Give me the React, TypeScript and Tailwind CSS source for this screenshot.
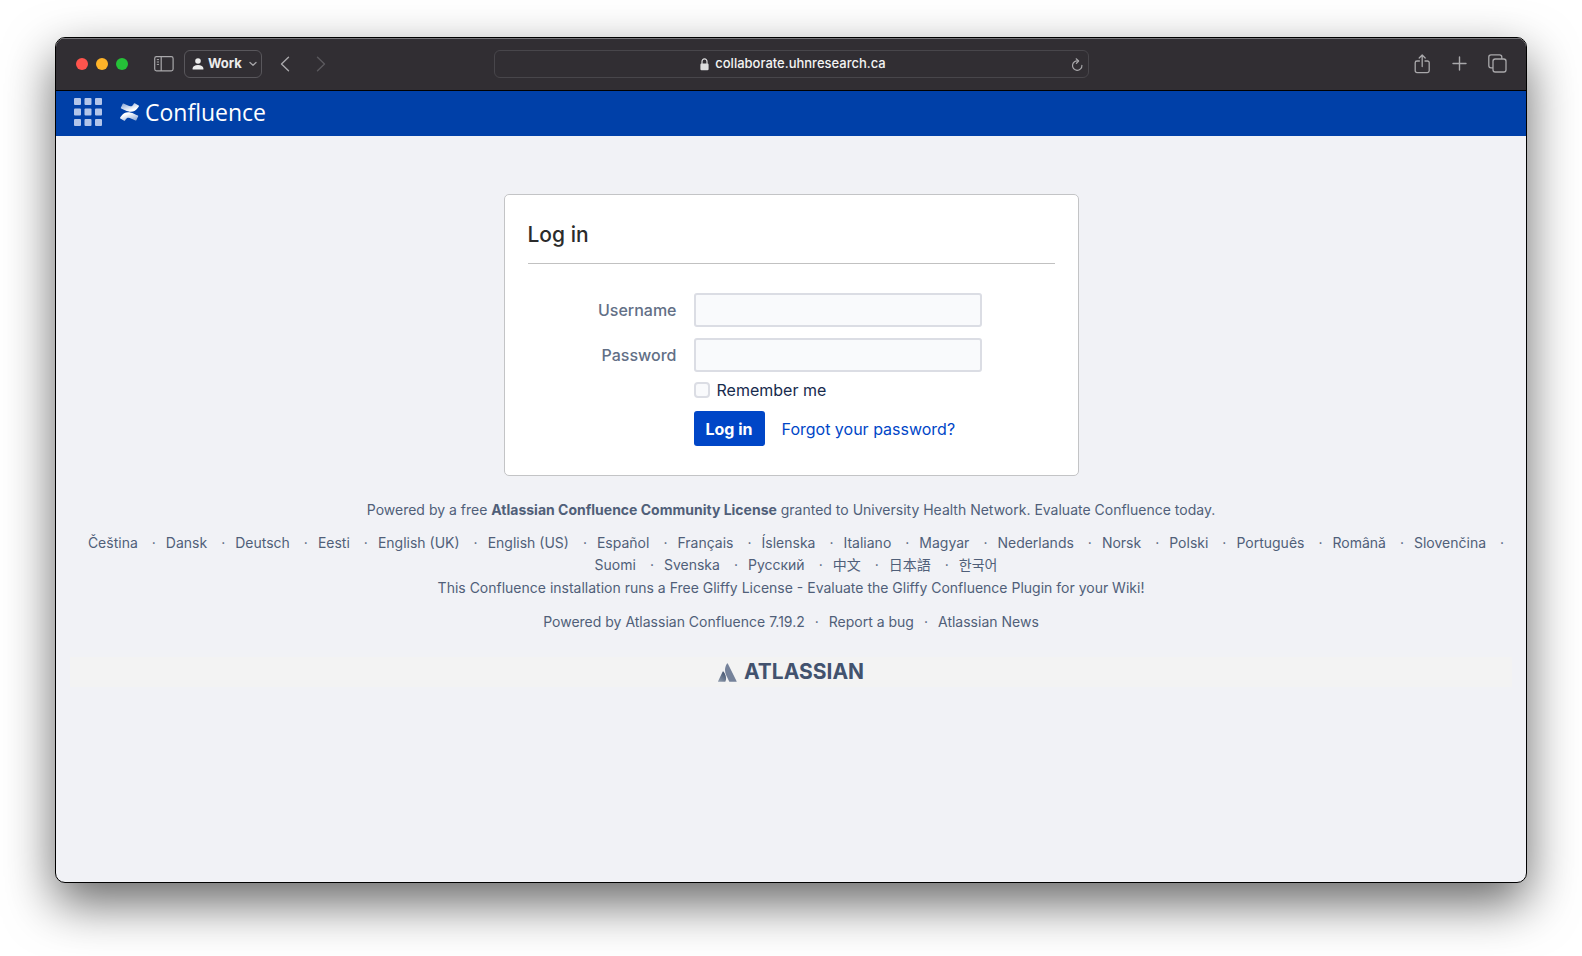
import React from "react";

const LANGUAGES = [
  "Čeština", "Dansk", "Deutsch", "Eesti", "English (UK)", "English (US)", "Español",
  "Français", "Íslenska", "Italiano", "Magyar", "Nederlands", "Norsk", "Polski",
  "Português", "Română", "Slovenčina", "Suomi", "Svenska", "Русский", "中文", "日本語", "한국어",
];

function SidebarIcon() {
  return (
    <svg width="20" height="16" viewBox="0 0 20 16" fill="none" stroke="#a9a8ab" strokeWidth="1.2">
      <rect x="0.7" y="0.7" width="18.4" height="14.2" rx="1.8" />
      <path d="M7.2 1v14" />
      <path d="M2.8 3.6h2.2M2.8 6h2.2M2.8 8.4h2.2" strokeWidth="1" />
    </svg>
  );
}

function Toolbar() {
  return (
    <div className="grid h-[53px] grid-cols-[1fr_minmax(0,595px)_1fr] items-center border-t border-b border-t-[#77767a] border-b-black bg-[#312e33] pb-0.5">
      <div className="flex items-center pl-5">
        <div className="flex gap-2">
          <button aria-label="Close" className="size-3 rounded-full bg-[#ff544d]" />
          <button aria-label="Minimize" className="size-3 rounded-full bg-[#ffb429]" />
          <button aria-label="Zoom" className="size-3 rounded-full bg-[#25c138]" />
        </div>
        <button aria-label="Sidebar" className="ml-[26px]"><SidebarIcon /></button>
        <button className="ml-2.5 flex h-7 items-center rounded-md border border-[#59575c] pr-1 pl-[7px] text-[13px] font-bold text-[#ececec]">
          <svg width="12" height="12" viewBox="0 0 12 12" fill="#ececec">
            <circle cx="6" cy="3" r="2.8" />
            <path d="M0.6 11.6V10.6C0.6 8.2 3 7 6 7s5.400 1.2 5.400 3.6v1z" />
          </svg>
          <span className="ml-1">Work</span>
          <svg className="ml-[7px]" width="8" height="6" viewBox="0 0 8 6" fill="none" stroke="#a5a4a7" strokeWidth="1.3" strokeLinecap="round" strokeLinejoin="round">
            <path d="M1 1.5l3 2.8 3-2.8" />
          </svg>
        </button>
        <button aria-label="Back" className="ml-[18px]">
          <svg width="10" height="16" viewBox="0 0 10 16" fill="none" stroke="#a9a8ab" strokeWidth="1.4" strokeLinecap="round" strokeLinejoin="round"><path d="M8.5 1.2L1.5 8l7 6.8" /></svg>
        </button>
        <button aria-label="Forward" className="ml-[26px]">
          <svg width="10" height="16" viewBox="0 0 10 16" fill="none" stroke="#5b595e" strokeWidth="1.4" strokeLinecap="round" strokeLinejoin="round"><path d="M1.5 1.2L8.5 8l-7 6.8" /></svg>
        </button>
      </div>
      <div className="flex h-7 items-center rounded-md border border-[#48464b] pr-[5px] pl-[21px] text-[13px] font-medium text-[#f4f4f4]">
        <div className="flex flex-1 items-center justify-center gap-1.5 pt-px">
          <svg width="9" height="13" viewBox="0 0 9 13">
            <rect x="0.4" y="5.6" width="8.2" height="6.6" rx="1.2" fill="#dcdcdd" />
            <path d="M2 6V3.400a2.500 2.500 0 0 1 5 0V6" fill="none" stroke="#dcdcdd" strokeWidth="1.2" />
          </svg>
          <span>collaborate.uhnresearch.ca</span>
        </div>
        <button aria-label="Reload" className="pt-0.5">
          <svg width="12" height="13" viewBox="0 0 12 13" fill="none" stroke="#a9a8ab" strokeWidth="1.2" strokeLinecap="round" strokeLinejoin="round">
            <path d="M7.200 3A4.700 4.700 0 1 0 10.900 7.400" />
            <path d="M5.200 0.800l2.400 2.200-2.200 2.400" />
          </svg>
        </button>
      </div>
      <div className="flex items-center justify-end gap-[21px] pr-[19px] text-[#a9a8ab]">
        <button aria-label="Share">
          <svg width="17" height="20" viewBox="0 0 17 20" fill="none" stroke="currentColor" strokeWidth="1.3" strokeLinecap="round" strokeLinejoin="round">
            <path d="M5.400 7H3a1.800 1.800 0 0 0-1.800 1.800v8A1.800 1.800 0 0 0 3 18.600h10.400a1.800 1.800 0 0 0 1.800-1.800v-8A1.800 1.800 0 0 0 13.400 7H11" />
            <path d="M8.200 12.500V1.200M5.200 4l3-3 3 3" />
          </svg>
        </button>
        <button aria-label="New tab">
          <svg width="15" height="15" viewBox="0 0 15 15" fill="none" stroke="currentColor" strokeWidth="1.4" strokeLinecap="round"><path d="M7.500 1v13M1 7.500h13" /></svg>
        </button>
        <button aria-label="Tab overview">
          <svg width="19" height="19" viewBox="0 0 19 19" fill="none" stroke="currentColor" strokeWidth="1.3" strokeLinejoin="round">
            <rect x="5" y="5" width="13" height="13" rx="2.2" />
            <path d="M5 13.800H3A2.200 2.200 0 0 1 0.800 11.600V3A2.200 2.200 0 0 1 3 0.800h8.600A2.200 2.200 0 0 1 13.800 3v2" />
          </svg>
        </button>
      </div>
    </div>
  );
}

function AppHeader() {
  return (
    <header className="flex h-[45px] items-center bg-[#0040a8] pb-[3px] pl-[18px]">
      <button aria-label="Linked applications">
        <svg width="28" height="28" viewBox="0 0 28 28" fill="#b2c5ea">
          {[0, 10.5, 21].map((y) => [0, 10.5, 21].map((x) => (
            <rect key={`${x}-${y}`} x={x} y={y} width="7" height="7" rx="1" />
          )))}
        </svg>
      </button>
      <a href="#" className="ml-[18px] flex items-center gap-1.5 font-['Open_Sans',sans-serif] text-[23px] leading-8 text-white">
        <svg width="19" height="18" viewBox="0 0 24 24" preserveAspectRatio="none">
          <defs>
            <linearGradient id="swooshBottom" x1="1" y1="1" x2="0.4" y2="0.2">
              <stop offset="0" stopColor="#fff" stopOpacity="0.5" />
              <stop offset="1" stopColor="#fff" />
            </linearGradient>
            <linearGradient id="swooshTop" x1="0" y1="0" x2="0.6" y2="0.8">
              <stop offset="0" stopColor="#fff" stopOpacity="0.5" />
              <stop offset="1" stopColor="#fff" />
            </linearGradient>
          </defs>
          <path fill="url(#swooshBottom)" d="M.87 18.257c-.248.382-.53.875-.763 1.245a.764.764 0 0 0 .255 1.040l4.965 3.054a.764.764 0 0 0 1.058-.26c.199-.332.454-.763.733-1.221 1.967-3.247 3.945-2.853 7.508-1.146l4.957 2.337a.764.764 0 0 0 1.028-.382l2.364-5.346a.764.764 0 0 0-.382-1 599.851 599.851 0 0 1-4.965-2.361C10.911 10.970 5.224 11.185.870 18.257z" />
          <path fill="url(#swooshTop)" d="M23.131 5.743c.249-.405.531-.875.764-1.250a.764.764 0 0 0-.256-1.034L18.675.404a.764.764 0 0 0-1.058.26c-.195.335-.451.763-.734 1.225-1.966 3.246-3.945 2.850-7.508 1.146L4.437.694a.764.764 0 0 0-1.027.382L1.046 6.422a.764.764 0 0 0 .382 1c1.039.49 3.105 1.467 4.965 2.361 6.698 3.246 12.392 3.029 16.738-4.040z" />
        </svg>
        <span>Confluence</span>
      </a>
    </header>
  );
}

function LoginCard() {
  const field = "h-[34px] w-72 rounded-[3px] border-2 border-[#dbdde4] bg-[#f9fafc] px-2";
  const label = "w-[149px] text-right font-medium text-[#626f86]";
  return (
    <section className="mx-auto mt-[58px] w-full max-w-[575px] rounded-[5px] border border-[#c3c4c6] bg-white px-[23px] pt-6 pb-[29px] text-base">
      <h1 className="border-b border-[#c1c1c1] pb-3 text-[21px] leading-8 font-medium text-[#2b2b2b]">Log in</h1>
      <form className="mt-[29px]">
        <div className="flex items-center gap-[17px]">
          <label htmlFor="username" className={label}>Username</label>
          <input id="username" type="text" className={field} />
        </div>
        <div className="mt-[11px] flex items-center gap-[17px]">
          <label htmlFor="password" className={label}>Password</label>
          <input id="password" type="password" className={field} />
        </div>
        <div className="mt-1 ml-[166px] flex h-7 items-center gap-[7px]">
          <input id="remember" type="checkbox" className="size-4 appearance-none rounded-[4px] border-2 border-[#dbdde4] bg-[#f9fafc]" />
          <label htmlFor="remember" className="text-[#172b4d]">Remember me</label>
        </div>
        <div className="mt-[7px] ml-[166px] flex items-center gap-[17px]">
          <button type="button" className="h-[35px] rounded-[3px] bg-[#0046c7] px-3 font-bold text-white">Log in</button>
          <a href="#" className="text-[#0046c7]">Forgot your password?</a>
        </div>
      </form>
    </section>
  );
}

function Footer() {
  return (
    <footer className="mt-[23px] px-[14px] text-center text-sm leading-[22px] text-[#505f79]">
      <p>
        Powered by a free <strong>Atlassian Confluence Community License</strong> granted to University Health Network. <a href="#">Evaluate Confluence today</a>.
      </p>
      <ul className="mt-[11px] flex flex-wrap justify-center">
        {LANGUAGES.map((name, i) => (
          <li key={name} className="flex pl-2.5">
            <a href="#">{name}</a>
            {i < LANGUAGES.length - 1 && <span className="pl-[14px]">·</span>}
          </li>
        ))}
      </ul>
      <p className="mt-px">
        This Confluence installation runs a Free Gliffy License - Evaluate the <a href="#">Gliffy Confluence Plugin</a> for your Wiki!
      </p>
      <ul className="mt-3 flex flex-wrap justify-center gap-2.5">
        <li>Powered by <a href="#">Atlassian Confluence</a> 7.19.2</li>
        <li>·</li>
        <li><a href="#">Report a bug</a></li>
        <li>·</li>
        <li><a href="#">Atlassian News</a></li>
      </ul>
      <div className="mt-6 flex h-[30px] items-center justify-center bg-[#f3f3f3]">
        <a href="#" className="flex items-center gap-[7px] text-[21px] font-bold text-[#42526e]">
          <svg width="19" height="19" viewBox="0 0 19 19">
            <defs>
              <linearGradient id="peak" x1="0.8" y1="0" x2="0.2" y2="1">
                <stop offset="0" stopColor="#42526e" />
                <stop offset="1" stopColor="#8c98aa" />
              </linearGradient>
            </defs>
            <path fill="url(#peak)" d="M5.600 8.700a.6.600 0 0 0-1 .1L.2 17.900a.6.600 0 0 0 .5.900h6.200a.6.600 0 0 0 .5-.3c1.400-2.800.6-7-1.800-9.800z" />
            <path fill="#75829a" d="M8.900.700C6.400 4.600 6.600 9 8.200 12.300l3 6.100a.6.600 0 0 0 .6.400H18a.6.600 0 0 0 .5-.9L9.900.700a.6.600 0 0 0-1 0z" />
          </svg>
          <span>ATLASSIAN</span>
        </a>
      </div>
    </footer>
  );
}

export default function App() {
  return (
    <div className="flex min-h-screen flex-col bg-white px-[55px] pt-[37px] pb-[73px] font-['Inter','Noto_Sans_CJK_SC','Noto_Sans_CJK_KR',sans-serif]">
      <div className="flex flex-1 flex-col overflow-hidden rounded-[10px] border border-black bg-[#f1f2f6] shadow-[0_20px_50px_rgba(0,0,0,0.6)]">
        <Toolbar />
        <AppHeader />
        <main>
          <LoginCard />
          <Footer />
        </main>
      </div>
    </div>
  );
}
